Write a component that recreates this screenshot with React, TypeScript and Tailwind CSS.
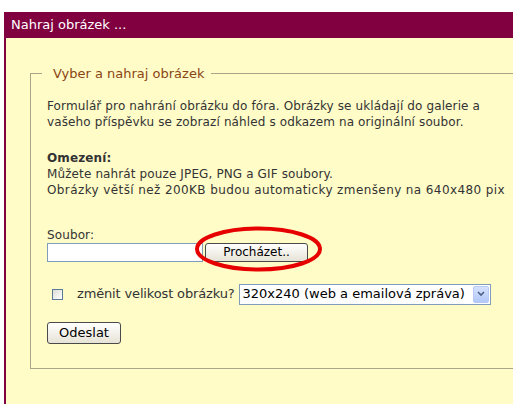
import React from 'react';

const font = { fontFamily: '"DejaVu Sans", Verdana, sans-serif' };

export default function App() {
  return (
    <div className="w-[517px] h-[404px] bg-white overflow-hidden relative text-[12px] text-[#333] tracking-[0.12px]" style={font}>
      <div className="pt-[12px] pl-[4px] w-[513px]">
        {/* header */}
        <div className="h-[26px] bg-[#800040] text-white text-[13px] tracking-normal flex items-center pl-[7px]">
          Nahraj obrázek ...
        </div>
        {/* panel */}
        <div className="h-[366px] bg-[#fffcc8] border-l-2 border-[#800040] overflow-hidden pl-[24px] pt-[26px]">
          <fieldset className="w-[540px] border border-[#a8a58a] pl-[16px] pt-[14px] pb-[24px]">
            <legend className="ml-[-5px] pl-[11px] pr-[7px] text-[13px] tracking-normal text-[#8b4513]">Vyber a nahraj obrázek</legend>

            <p className="leading-[16px] whitespace-nowrap">
              Formulář pro nahrání obrázku do fóra. Obrázky se ukládají do galerie a
              <br />
              vašeho příspěvku se zobrazí náhled s odkazem na originální soubor.
            </p>

            <div className="mt-[20px] leading-[16px] whitespace-nowrap">
              <div className="font-bold">Omezení:</div>
              <div>Můžete nahrát pouze JPEG, PNG a GIF soubory.</div>
              <div className="tracking-[0.4px]">Obrázky větší než 200KB budou automaticky zmenšeny na 640x480 pix</div>
            </div>

            <div className="mt-[29px] leading-[16px]">Soubor:</div>
            <div className="flex items-center gap-[2px]">
              <div className="w-[156px] h-[19px] bg-white border border-[#7f9db9]" />
              <div className="w-[103px] h-[19px] rounded-[3px] border border-[#4a4a4a] bg-gradient-to-b from-white to-[#e6e3d6] flex items-center justify-center text-[12px] tracking-normal text-black">
                Procházet..
              </div>
            </div>

            <div className="flex items-center mt-[22px]">
              <div className="ml-[5px] w-[11px] h-[11px] border border-[#5a7a9c] bg-gradient-to-br from-[#dcdcd6] to-white" />
              <span className="ml-[14px] text-[13px] tracking-[-0.15px] whitespace-nowrap">změnit velikost obrázku?</span>
              <div className="ml-[4px] w-[252px] h-[21px] bg-white border border-[#7f9db9] flex items-center">
                <span className="flex-1 pl-[3px] text-[13px] tracking-normal text-black whitespace-nowrap">320x240 (web a emailová zpráva)</span>
                <div className="w-[16px] h-[17px] mr-[1px] bg-gradient-to-b from-[#d6e2fd] to-[#b2c8f8] border border-[#b7c9f5] rounded-[2px] flex items-center justify-center">
                  <svg width="8" height="6" viewBox="0 0 8 6">
                    <path d="M1 1 L4 4 L7 1" stroke="#4d6185" strokeWidth="1.6" fill="none" />
                  </svg>
                </div>
              </div>
            </div>

            <div className="mt-[17px] w-[74px] h-[22px] rounded-[3px] border border-[#4a4a4a] bg-gradient-to-b from-white to-[#e6e3d6] flex items-center justify-center text-[13px] tracking-normal text-black">
              Odeslat
            </div>
          </fieldset>
        </div>
      </div>

      {/* red highlight ellipse */}
      <svg className="absolute left-0 top-0 pointer-events-none" width="517" height="404">
        <ellipse cx="258.5" cy="249" rx="61.5" ry="20.5" fill="none" stroke="#e60000" strokeWidth="4" />
      </svg>
    </div>
  );
}
